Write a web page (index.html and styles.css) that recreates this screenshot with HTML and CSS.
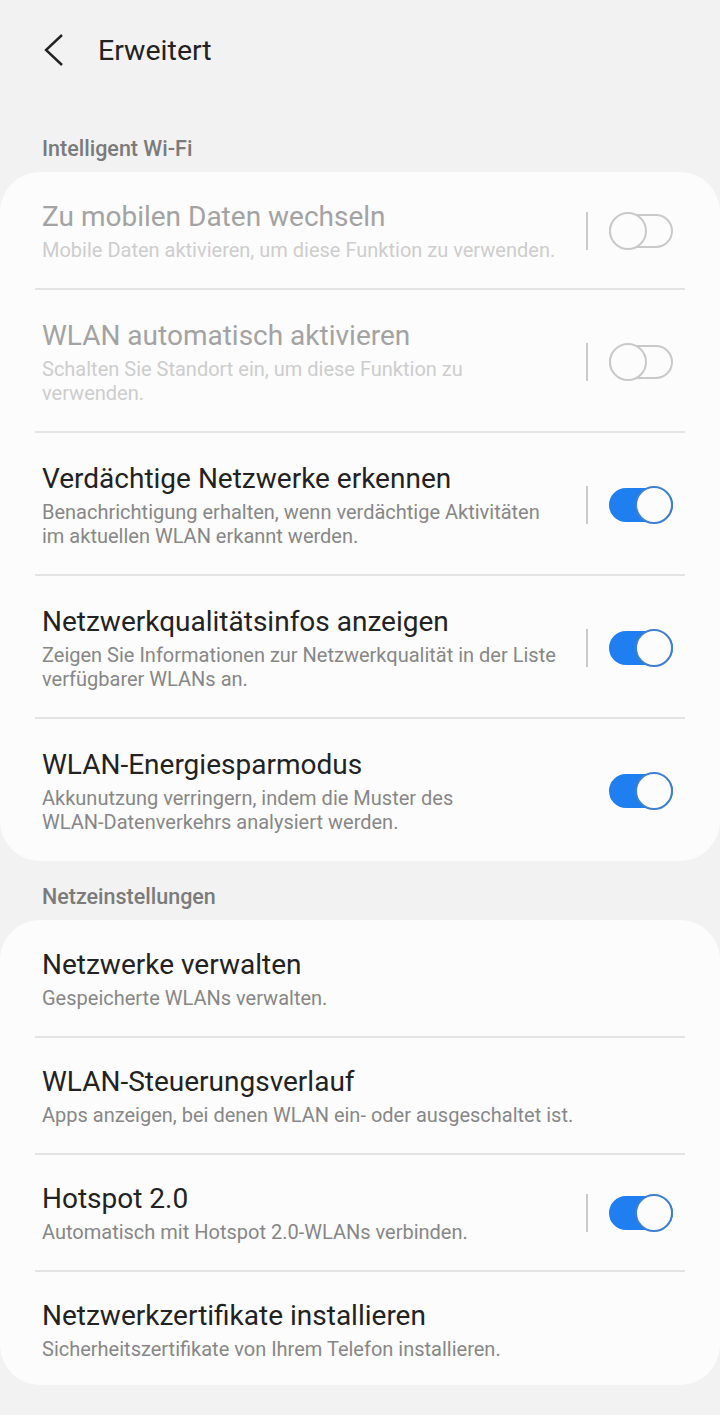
FILE: index.html
```html
<!DOCTYPE html>
<html>
<head>
    <title>Erweitert</title>
    <link rel="stylesheet" href="styles.css">
</head>
<body>
    <div class="header">
        <svg class="back" width="22" height="34" viewBox="0 0 22 34">
            <polyline points="19,2 3,17 19,32" fill="none" stroke="#222" stroke-width="2.4"/>
        </svg>
        <h1>Erweitert</h1>
    </div>

    <div class="section-title">Intelligent Wi-Fi</div>
    <div class="card">
        <div class="row disabled">
            <div class="text">
                <div class="title">Zu mobilen Daten wechseln</div>
                <div class="sub">Mobile Daten aktivieren, um diese Funktion zu verwenden.</div>
            </div>
            <span class="vline"></span>
            <span class="switch"></span>
        </div>
        <div class="row two disabled">
            <div class="text">
                <div class="title">WLAN automatisch aktivieren</div>
                <div class="sub">Schalten Sie Standort ein, um diese Funktion zu<br>verwenden.</div>
            </div>
            <span class="vline"></span>
            <span class="switch"></span>
        </div>
        <div class="row two">
            <div class="text">
                <div class="title">Verdächtige Netzwerke erkennen</div>
                <div class="sub">Benachrichtigung erhalten, wenn verdächtige Aktivitäten<br>im aktuellen WLAN erkannt werden.</div>
            </div>
            <span class="vline"></span>
            <span class="switch on"></span>
        </div>
        <div class="row two">
            <div class="text">
                <div class="title">Netzwerkqualitätsinfos anzeigen</div>
                <div class="sub">Zeigen Sie Informationen zur Netzwerkqualität in der Liste<br>verfügbarer WLANs an.</div>
            </div>
            <span class="vline"></span>
            <span class="switch on"></span>
        </div>
        <div class="row two">
            <div class="text">
                <div class="title">WLAN-Energiesparmodus</div>
                <div class="sub">Akkunutzung verringern, indem die Muster des<br>WLAN-Datenverkehrs analysiert werden.</div>
            </div>
            <span class="switch on"></span>
        </div>
    </div>

    <div class="section-title next">Netzeinstellungen</div>
    <div class="card">
        <div class="row">
            <div class="text">
                <div class="title">Netzwerke verwalten</div>
                <div class="sub">Gespeicherte WLANs verwalten.</div>
            </div>
        </div>
        <div class="row">
            <div class="text">
                <div class="title">WLAN-Steuerungsverlauf</div>
                <div class="sub">Apps anzeigen, bei denen WLAN ein- oder ausgeschaltet ist.</div>
            </div>
        </div>
        <div class="row">
            <div class="text">
                <div class="title">Hotspot 2.0</div>
                <div class="sub">Automatisch mit Hotspot 2.0-WLANs verbinden.</div>
            </div>
            <span class="vline"></span>
            <span class="switch on"></span>
        </div>
        <div class="row last">
            <div class="text">
                <div class="title">Netzwerkzertifikate installieren</div>
                <div class="sub">Sicherheitszertifikate von Ihrem Telefon installieren.</div>
            </div>
        </div>
    </div>
</body>
</html>
```

FILE: styles.css
```css
body {
    margin: 0;
    background: #f2f2f2;
    font-family: Roboto, "Noto Sans", sans-serif;
    color: #222;
}

.header {
    display: flex;
    align-items: center;
    height: 100px;
    padding-left: 43px;
}

.back {
    display: block;
}

.header h1 {
    margin: 0 0 0 33px;
    font-size: 28.5px;
    font-weight: 400;
    color: #222;
}

.section-title {
    padding: 36px 42px 0;
    height: 36px;
    line-height: 26px;
    font-size: 21.5px;
    font-weight: 500;
    color: #7b7b7b;
}

.section-title.next {
    padding-top: 23px;
}

.card {
    background: #fcfcfc;
    border-radius: 40px;
}

.row {
    display: flex;
    align-items: center;
    padding: 28px 47px 27px 42px;
    position: relative;
}

.row.two {
    padding-top: 30px;
    padding-bottom: 27px;
}

.row.last {
    padding-bottom: 24px;
}

.row + .row::before {
    content: "";
    position: absolute;
    top: -1px;
    left: 35px;
    right: 35px;
    height: 2px;
    background: #e4e4e4;
}

.text {
    flex: 1;
    min-width: 0;
    white-space: nowrap;
}

.title {
    font-size: 28px;
    line-height: 34px;
    color: #222;
}

.sub {
    margin-top: 4px;
    font-size: 20px;
    line-height: 24px;
    color: #878787;
}

.disabled .title {
    color: #a3a3a3;
}

.disabled .sub {
    color: #cdcdcd;
}

.vline {
    width: 2px;
    height: 38px;
    background: #cacaca;
    margin-right: 21px;
}

.switch {
    position: relative;
    width: 64px;
    height: 34px;
    box-sizing: border-box;
    border: 2px solid #c9c9c9;
    border-radius: 17px;
}

.switch::after {
    content: "";
    position: absolute;
    left: -2px;
    top: -4px;
    width: 38px;
    height: 38px;
    box-sizing: border-box;
    border: 2px solid #c9c9c9;
    border-radius: 50%;
    background: #fcfcfc;
}

.switch.on {
    background: #1f7ef0;
    border-color: #1f7ef0;
}

.switch.on::after {
    left: auto;
    right: -2px;
    border-color: #3e7fcf;
    background: #fcfcfc;
}
```
